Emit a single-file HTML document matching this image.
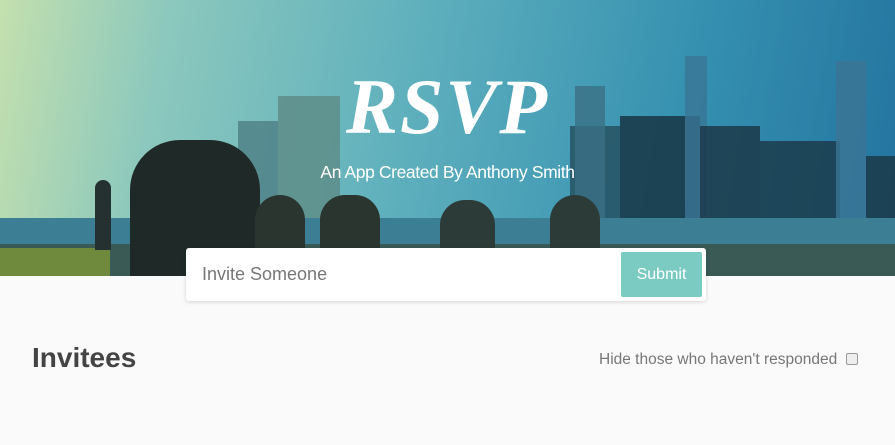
<!DOCTYPE html>
<html><head><meta charset="utf-8"><style>
*{margin:0;padding:0;box-sizing:border-box}
body{width:895px;height:445px;background:#fafafa;overflow:hidden;font-family:"Liberation Sans",sans-serif;position:relative}
.hdr{position:absolute;left:0;top:0;width:895px;height:276px;overflow:hidden;
background:linear-gradient(100deg,#c4e0ae 0%,#8cc8bd 18%,#5fb0bd 45%,#3590b0 75%,#23749f 100%)}
.b{position:absolute;bottom:50px;background:#1f3a44;opacity:.8}
.t{position:absolute;font-family:"Liberation Serif",serif;font-style:italic;font-weight:bold;color:#fff;font-size:78px;left:0;width:895px;text-align:center;top:62px;letter-spacing:2px}
.s{position:absolute;color:#fff;font-size:17.5px;left:0;width:895px;text-align:center;top:162px;letter-spacing:-0.4px}
.box{position:absolute;left:186px;top:248px;width:520px;height:53px;background:#fff;border-radius:3px;box-shadow:0 1px 4px rgba(0,0,0,.15)}
.box span{position:absolute;left:16px;top:16px;font-size:18px;color:#777}
.btn{position:absolute;left:435px;top:4px;width:81px;height:45px;background:#7ccbc2;border-radius:2px;color:#fff;font-size:16px;text-align:center;line-height:45px}
h2{position:absolute;left:32px;top:342px;font-size:28px;font-weight:bold;color:#444}
.hide{position:absolute;left:599px;top:351px;font-size:15.5px;color:#777}
.cb{position:absolute;left:846px;top:353px;width:12px;height:12px;border:1px solid #999;border-radius:2px;background:#eee}
</style></head><body>
<div class="hdr">
 <div class="b" style="left:238px;width:40px;height:105px;background:#4e7e84"></div>
 <div class="b" style="left:278px;width:62px;height:130px;background:#5c8b86"></div>
 <div class="b" style="left:570px;width:50px;height:100px;background:#244d5c"></div>
 <div class="b" style="left:575px;width:30px;height:140px;background:#3b6f85"></div>
 <div class="b" style="left:620px;width:80px;height:110px;background:#15303d"></div>
 <div class="b" style="left:685px;width:22px;height:170px;background:#3a7595"></div>
 <div class="b" style="left:700px;width:60px;height:100px;background:#1a3442"></div>
 <div class="b" style="left:760px;width:80px;height:85px;background:#1a3746"></div>
 <div class="b" style="left:836px;width:30px;height:165px;background:#3b7493"></div>
 <div class="b" style="left:866px;width:29px;height:70px;background:#1a3442"></div>
 <div style="position:absolute;left:0;top:218px;width:895px;height:30px;background:#3c7f95"></div>
 <div style="position:absolute;left:0;top:244px;width:895px;height:32px;background:#3a5a55"></div>
 <div style="position:absolute;left:0;top:248px;width:110px;height:28px;background:#6f8a3c"></div>
 <div style="position:absolute;left:130px;top:140px;width:130px;height:140px;background:#1f2a28;border-radius:50px 50px 0 0"></div>
 <div style="position:absolute;left:255px;top:195px;width:50px;height:80px;background:#2a3530;border-radius:25px 25px 0 0"></div>
 <div style="position:absolute;left:320px;top:195px;width:60px;height:80px;background:#2a3530;border-radius:25px 25px 0 0"></div>
 <div style="position:absolute;left:440px;top:200px;width:55px;height:76px;background:#2c3b38;border-radius:25px 25px 0 0"></div>
 <div style="position:absolute;left:550px;top:195px;width:50px;height:80px;background:#2c3b38;border-radius:25px 25px 0 0"></div>
 <div style="position:absolute;left:95px;top:180px;width:16px;height:70px;background:#253030;border-radius:8px 8px 0 0"></div>
 <div class="t">RSVP</div>
 <div class="s">An App Created By Anthony Smith</div>
</div>
<div class="box"><span>Invite Someone</span><div class="btn">Submit</div></div>
<h2>Invitees</h2>
<div class="hide">Hide those who haven't responded</div>
<div class="cb"></div>
</body></html>
